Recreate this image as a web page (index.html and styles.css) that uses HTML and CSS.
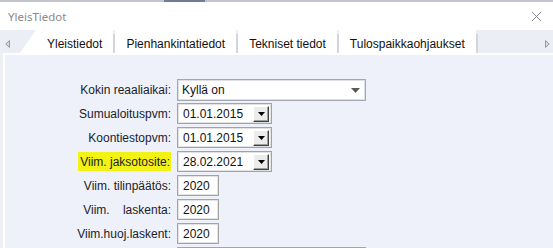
FILE: index.html
```
<!DOCTYPE html>
<html lang="fi">
<head>
  <meta charset="UTF-8">
  <title>YleisTiedot</title>
  <link rel="stylesheet" href="styles.css">
</head>
<body>
  <div class="window">
    <div class="topline"><span class="topline-mark"></span></div>

    <div class="titlebar">
      <span class="title">YleisTiedot</span>
      <svg class="close" width="11" height="11" viewBox="0 0 11 11">
        <path d="M1 1 L10 10 M10 1 L1 10" stroke="#8a8a8a" stroke-width="1" fill="none"/>
      </svg>
    </div>

    <div class="tabstrip">
      <span class="tab-arrow">
        <svg width="5" height="8" viewBox="0 0 5 8"><path d="M4.5 0.5 L0.8 4 L4.5 7.5 Z" fill="#d8d8d8" stroke="#9a9a9a" stroke-width="1"/></svg>
      </span>
      <div class="tab active">Yleistiedot</div>
      <span class="tab-sep"></span>
      <div class="tab">Pienhankintatiedot</div>
      <span class="tab-sep"></span>
      <div class="tab">Tekniset tiedot</div>
      <span class="tab-sep"></span>
      <div class="tab">Tulospaikkaohjaukset</div>
      <span class="tab-sep"></span>
      <span class="tab-fill"></span>
      <span class="tab-arrow right">
        <svg width="5" height="8" viewBox="0 0 5 8"><path d="M0.5 0.5 L4.2 4 L0.5 7.5 Z" fill="#d8d8d8" stroke="#9a9a9a" stroke-width="1"/></svg>
      </span>
    </div>

    <div class="panel">
      <div class="form">
        <span class="lbl">Kokin reaaliaikai:</span>
        <div class="select">
          <span>Kyllä on</span>
          <svg width="9" height="5" viewBox="0 0 9 5"><path d="M0 0 H9 L4.5 5 Z" fill="#5a5a5a"/></svg>
        </div>

        <span class="lbl">Sumualoituspvm:</span>
        <div class="date">
          <span>01.01.2015</span>
          <span class="drop-btn"><svg width="7" height="4" viewBox="0 0 7 4"><path d="M0 0 H7 L3.5 4 Z" fill="#000"/></svg></span>
        </div>

        <span class="lbl">Koontiestopvm:</span>
        <div class="date">
          <span>01.01.2015</span>
          <span class="drop-btn"><svg width="7" height="4" viewBox="0 0 7 4"><path d="M0 0 H7 L3.5 4 Z" fill="#000"/></svg></span>
        </div>

        <span class="lbl"><span class="mark">Viim. jaksotosite:</span></span>
        <div class="date">
          <span>28.02.2021</span>
          <span class="drop-btn"><svg width="7" height="4" viewBox="0 0 7 4"><path d="M0 0 H7 L3.5 4 Z" fill="#000"/></svg></span>
        </div>

        <span class="lbl">Viim. tilinpäätös:</span>
        <div class="year">2020</div>

        <span class="lbl">Viim.    laskenta:</span>
        <div class="year">2020</div>

        <span class="lbl">Viim.huoj.laskent:</span>
        <div class="year">2020</div>

        <span class="lbl"></span>
        <div class="wide"></div>
      </div>
    </div>
  </div>
</body>
</html>
```

FILE: styles.css
```
* {
  box-sizing: border-box;
}

body {
  margin: 0;
  width: 553px;
  height: 248px;
  overflow: hidden;
  background: #eef0f6;
  font-family: "Liberation Sans", Arial, sans-serif;
  font-size: 12px;
  color: #111;
}

.window {
  display: flex;
  flex-direction: column;
  height: 100%;
}

.topline {
  flex-shrink: 0;
  height: 2px;
  background: #c4c5cc;
  display: flex;
}

.topline-mark {
  width: 41px;
  margin-left: 164px;
  background: #737a94;
}

.titlebar {
  flex-shrink: 0;
  height: 28px;
  background: #fff;
  display: flex;
  align-items: center;
  justify-content: space-between;
  padding: 1px 11px 0 8px;
}

.title {
  font-family: "Noto Sans", "Open Sans", sans-serif;
  font-size: 11.5px;
  color: #8a8a8a;
}

.tabstrip {
  flex-shrink: 0;
  height: 23px;
  display: flex;
  background: #eceef5;
}

.tab-arrow {
  width: 20px;
  display: flex;
  align-items: center;
  padding: 5px 0 0 5px;
}

.tab-arrow.right {
  width: 9px;
  padding-left: 1px;
}

.tab {
  background: #fff;
  padding: 7px 11px 0 11px;
  white-space: nowrap;
  color: #111;
}

.tab.active {
  padding-left: 27px;
  clip-path: polygon(16px 0, 100% 0, 100% 100%, 0 100%);
}

.tab-sep {
  width: 2px;
  margin-top: 4px;
  background: #d4d5da;
}

.tab-fill {
  flex: 1;
}

.panel {
  flex: 1;
  min-height: 0;
  overflow: hidden;
  margin-left: 3px;
  border-top: 2px solid #fff;
  border-left: 2px solid #fff;
  background: #eef1fa;
}

.form {
  display: grid;
  grid-template-columns: 166px max-content;
  grid-auto-rows: 21px;
  column-gap: 6px;
  row-gap: 3px;
  padding-top: 24px;
}

.lbl {
  align-self: center;
  text-align: right;
  white-space: pre;
  color: #1c1c28;
}

.mark {
  background: #f2f214;
  padding: 3px 1px 2px 2px;
}

.select {
  width: 189px;
  height: 22px;
  border: 1px solid #a3a7b2;
  box-shadow: inset 0 0 0 1px #dde0e7;
  background: #fff;
  display: flex;
  align-items: center;
  justify-content: space-between;
  padding: 0 5px 0 4px;
}

.date {
  width: 95px;
  border: 1px solid #a4a4a4;
  box-shadow: inset 0 0 0 1px #e2e2e2;
  background: #fff;
  display: flex;
  align-items: center;
  justify-content: space-between;
  padding: 0 2px 0 5px;
}

.drop-btn {
  width: 16px;
  height: 16px;
  display: flex;
  align-items: center;
  justify-content: center;
  background: #ececec;
  border-top: 1px solid #fff;
  border-left: 1px solid #fff;
  border-right: 1px solid #404040;
  border-bottom: 1px solid #404040;
  box-shadow: inset -1px -1px 0 #a0a0a0;
}

.year {
  width: 42px;
  border: 1px solid #a4a4a4;
  box-shadow: inset 0 0 0 1px #e2e2e2;
  background: #fff;
  display: flex;
  align-items: center;
  padding-left: 5px;
}

.wide {
  width: 189px;
  border: 1px solid #a4a4a4;
  background: #fff;
}
```
